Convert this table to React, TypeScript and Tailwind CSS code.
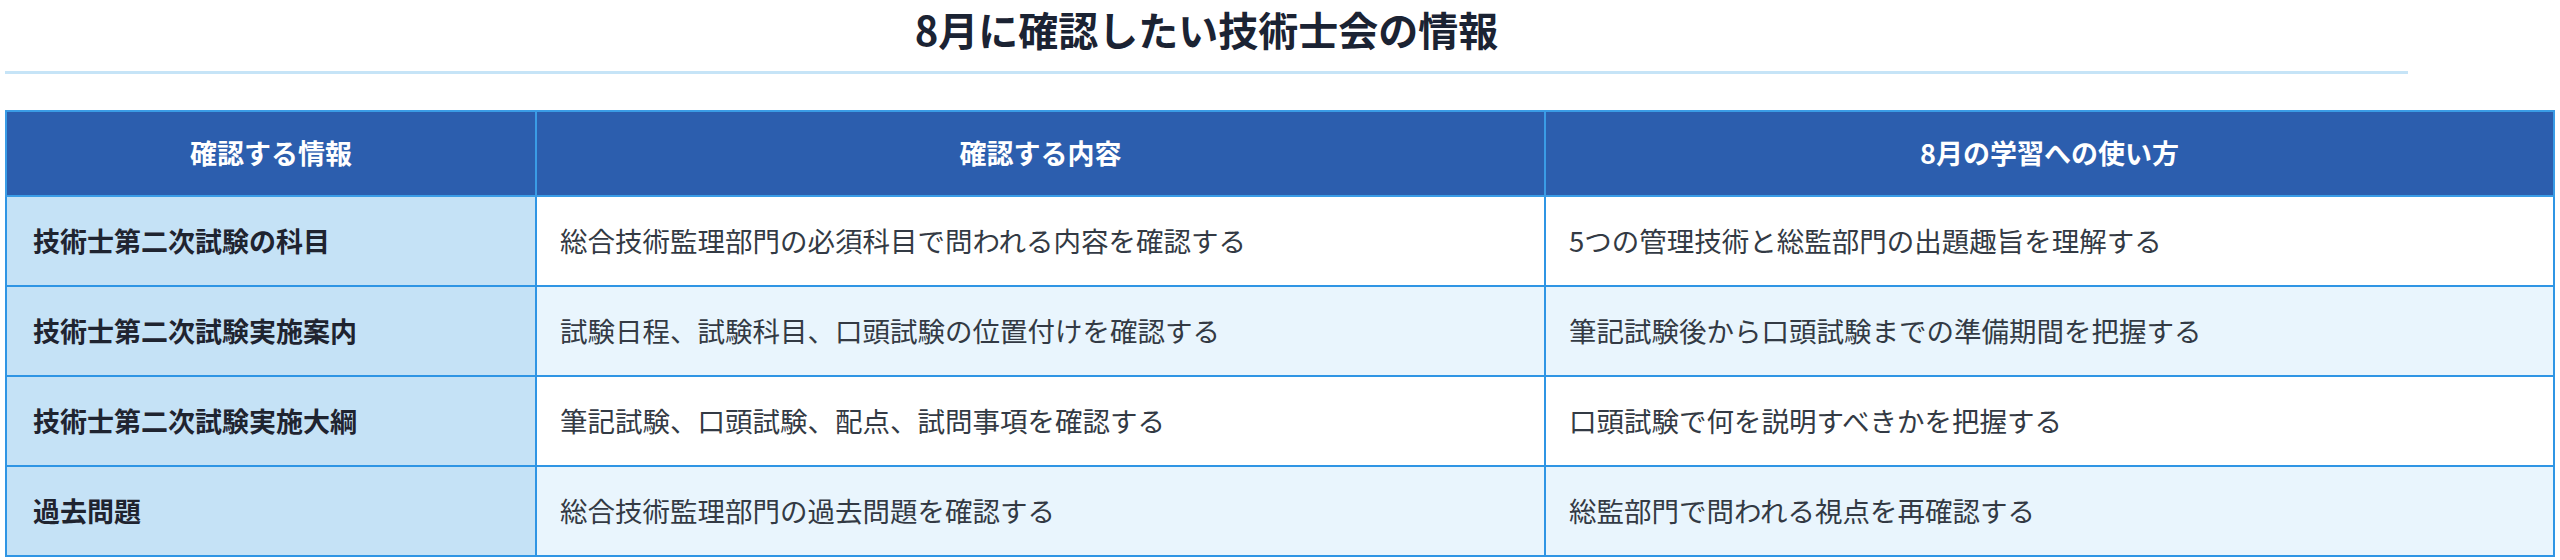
const rows = [
  {
    item: "技術士第二次試験の科目",
    content: "総合技術監理部門の必須科目で問われる内容を確認する",
    usage: "5つの管理技術と総監部門の出題趣旨を理解する",
  },
  {
    item: "技術士第二次試験実施案内",
    content: "試験日程、試験科目、口頭試験の位置付けを確認する",
    usage: "筆記試験後から口頭試験までの準備期間を把握する",
  },
  {
    item: "技術士第二次試験実施大綱",
    content: "筆記試験、口頭試験、配点、試問事項を確認する",
    usage: "口頭試験で何を説明すべきかを把握する",
  },
  {
    item: "過去問題",
    content: "総合技術監理部門の過去問題を確認する",
    usage: "総監部門で問われる視点を再確認する",
  },
];

export default function App() {
  return (
    <div
      className="min-h-[560px] bg-white px-[5px]"
      style={{ fontFamily: "'Noto Sans CJK JP', 'Noto Sans', sans-serif" }}
    >
      <div className="w-[2403px] border-b-[3px] border-[#c6e4f7] pb-[13px]">
        <h2 className="text-center text-[40px] font-bold leading-[58px] text-[#1b2333]">
          8月に確認したい技術士会の情報
        </h2>
      </div>

      <table className="mt-[36px] w-full table-fixed border-collapse">
        <colgroup>
          <col className="w-[530px]" />
          <col className="w-[1009px]" />
          <col />
        </colgroup>
        <thead>
          <tr className="h-[85px] bg-[#2c5eae] text-[27px] text-white">
            <th className="border-2 border-[#3a9ce6] font-bold">確認する情報</th>
            <th className="border-2 border-[#3a9ce6] font-bold">確認する内容</th>
            <th className="border-2 border-[#3a9ce6] font-bold">8月の学習への使い方</th>
          </tr>
        </thead>
        <tbody>
          {rows.map((row, i) => (
            <tr key={row.item} className={i % 2 === 1 ? "h-[90px] bg-[#e9f5fd]" : "h-[90px] bg-white"}>
              <td className="border-2 border-[#2f95e4] bg-[#c5e2f6] px-[26px] text-[27px] font-bold text-[#1f2430]">
                {row.item}
              </td>
              <td className="border-2 border-[#2f95e4] px-[23px] text-[27.5px] text-[#333a44]">{row.content}</td>
              <td className="border-2 border-[#2f95e4] px-[23px] text-[27.5px] text-[#333a44]">{row.usage}</td>
            </tr>
          ))}
        </tbody>
      </table>
    </div>
  );
}
